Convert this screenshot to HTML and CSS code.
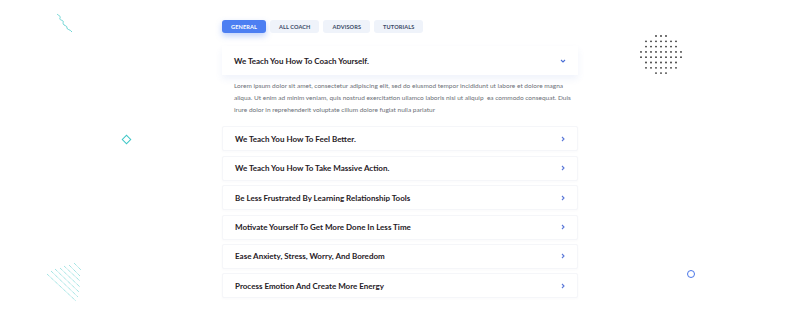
FILE: index.html
```html
<!DOCTYPE html>
<html>
<head>
<meta charset="utf-8">
<link rel="stylesheet" href="styles.css">
</head>
<body>
<div class="deco deco-squiggle">
  <svg width="18" height="20" viewBox="0 0 18 20"><path d="M1 1 C3 3 5 3 4 5 C3 7 6 7 7 8 C8 9 6 10 8 12 C10 13 11 13 11 15 C11 17 14 16 16 19" fill="none" stroke="#5fd0cf" stroke-width="0.9"/></svg>
</div>
<div class="deco deco-diamond"></div>
<div class="deco deco-dots">
  <svg width="44" height="44" viewBox="0 0 44 44" id="dots"></svg>
</div>
<div class="deco deco-hatch">
  <svg width="40" height="42" viewBox="0 0 40 42">
    <g stroke="#5fd0cf" stroke-width="0.8" stroke-dasharray="1 0.8">
      <line x1="2" y1="13" x2="31" y2="40"/>
      <line x1="6" y1="10" x2="33" y2="36"/>
      <line x1="10" y1="8" x2="34" y2="31"/>
      <line x1="15" y1="7" x2="35" y2="26"/>
      <line x1="19" y1="5" x2="35" y2="20"/>
      <line x1="24" y1="4" x2="35" y2="15"/>
      <line x1="29" y1="2" x2="36" y2="9"/>
    </g>
  </svg>
</div>
<div class="deco deco-circle"></div>

<main class="faq">
  <nav class="tabs">
    <span class="tab active">General</span>
    <span class="tab">All Coach</span>
    <span class="tab">Advisors</span>
    <span class="tab">Tutorials</span>
  </nav>
  <div class="accordion">
    <div class="item open">
      <div class="head">
        <span class="title">We Teach You How To Coach Yourself.</span>
        <svg class="chev" width="6" height="4" viewBox="0 0 6 4"><path d="M1 1 L3 3 L5 1" fill="none" stroke="#4a6fd6" stroke-width="1.1"/></svg>
      </div>
      <p class="body">Lorem ipsum dolor sit amet, consectetur adipiscing elit, sed do eiusmod tempor incididunt ut labore et dolore magna aliqua. Ut enim ad minim veniam, quis nostrud exercitation ullamco laboris nisi ut aliquip&nbsp; ea commodo consequat. Duis irure dolor in reprehenderit voluptate cillum dolore fugiat nulla pariatur</p>
    </div>
    <div class="item"><span class="title">We Teach You How To Feel Better.</span><svg class="chev" width="4" height="6" viewBox="0 0 4 6"><path d="M1 1 L3 3 L1 5" fill="none" stroke="#5b78d8" stroke-width="1.1"/></svg></div>
    <div class="item"><span class="title">We Teach You How To Take Massive Action.</span><svg class="chev" width="4" height="6" viewBox="0 0 4 6"><path d="M1 1 L3 3 L1 5" fill="none" stroke="#5b78d8" stroke-width="1.1"/></svg></div>
    <div class="item"><span class="title">Be Less Frustrated By Learning Relationship Tools</span><svg class="chev" width="4" height="6" viewBox="0 0 4 6"><path d="M1 1 L3 3 L1 5" fill="none" stroke="#5b78d8" stroke-width="1.1"/></svg></div>
    <div class="item"><span class="title">Motivate Yourself To Get More Done In Less Time</span><svg class="chev" width="4" height="6" viewBox="0 0 4 6"><path d="M1 1 L3 3 L1 5" fill="none" stroke="#5b78d8" stroke-width="1.1"/></svg></div>
    <div class="item"><span class="title">Ease Anxiety, Stress, Worry, And Boredom</span><svg class="chev" width="4" height="6" viewBox="0 0 4 6"><path d="M1 1 L3 3 L1 5" fill="none" stroke="#5b78d8" stroke-width="1.1"/></svg></div>
    <div class="item"><span class="title">Process Emotion And Create More Energy</span><svg class="chev" width="4" height="6" viewBox="0 0 4 6"><path d="M1 1 L3 3 L1 5" fill="none" stroke="#5b78d8" stroke-width="1.1"/></svg></div>
  </div>
</main>
<script>
  var s = document.getElementById('dots'), h = '';
  for (var r = 0; r < 8; r++) {
    for (var c = 0; c < 9; c++) {
      var x = 2 + c * 5, y = 2 + r * 5.3;
      var dx = x - 22, dy = y - 20.5;
      if (dx * dx + dy * dy <= 21 * 21) h += '<circle cx="' + x + '" cy="' + y + '" r="0.9" fill="#333"/>';
    }
  }
  s.innerHTML = h;
</script>
</body>
</html>
```
FILE: styles.css
```css
html, body {
  margin: 0;
  padding: 0;
  background: #ffffff;
  font-family: "Lato", "Noto Sans", sans-serif;
}

body {
  width: 800px;
  height: 334px;
  position: relative;
  overflow: hidden;
}

.faq {
  width: 356px;
  margin: 0 auto;
  padding-top: 20px;
}

.tabs {
  display: flex;
  gap: 4px;
}

.tab {
  height: 13px;
  line-height: 13px;
  padding: 0 9px;
  border-radius: 3px;
  background: #eff3fa;
  color: #3b4a66;
  font-size: 5.6px;
  font-weight: 700;
  text-transform: uppercase;
  letter-spacing: 0.1px;
}

.tab.active {
  background: #4d7ff2;
  color: #ffffff;
  box-shadow: 0 3px 6px rgba(77, 127, 242, 0.35);
}

.accordion {
  margin-top: 13px;
  display: flex;
  flex-direction: column;
  gap: 4.4px;
}

.item {
  height: 25px;
  box-sizing: border-box;
  display: flex;
  align-items: center;
  justify-content: space-between;
  padding: 0 12px;
  border: 1px solid #f5f6f9;
  border-radius: 2px;
  background: #fff;
  box-shadow: 0 1px 3px rgba(20, 40, 90, 0.025);
}

.item.open {
  height: auto;
  display: block;
  padding: 0;
  border: none;
  box-shadow: none;
  margin-bottom: 6px;
}

.head {
  height: 29px;
  display: flex;
  align-items: center;
  justify-content: space-between;
  padding: 0 12px;
  box-shadow: 0 4px 7px rgba(60, 100, 200, 0.08);
}

.title {
  font-size: 8px;
  font-weight: 700;
  color: #1f2026;
}

.body {
  margin: 0;
  padding: 5px 4px 0 12px;
  font-size: 6.5px;
  line-height: 12px;
  color: #6b6f77;
}

.deco {
  position: absolute;
}

.deco-squiggle {
  left: 56px;
  top: 13px;
}

.deco-diamond {
  left: 123px;
  top: 136px;
  width: 5px;
  height: 5px;
  border: 1px solid #3fc7c7;
  transform: rotate(45deg);
}

.deco-dots {
  left: 639px;
  top: 34px;
}

.deco-hatch {
  left: 45px;
  top: 261px;
}

.deco-circle {
  left: 687px;
  top: 270px;
  width: 6px;
  height: 6px;
  border: 1.3px solid #4a76e8;
  border-radius: 50%;
}
```
